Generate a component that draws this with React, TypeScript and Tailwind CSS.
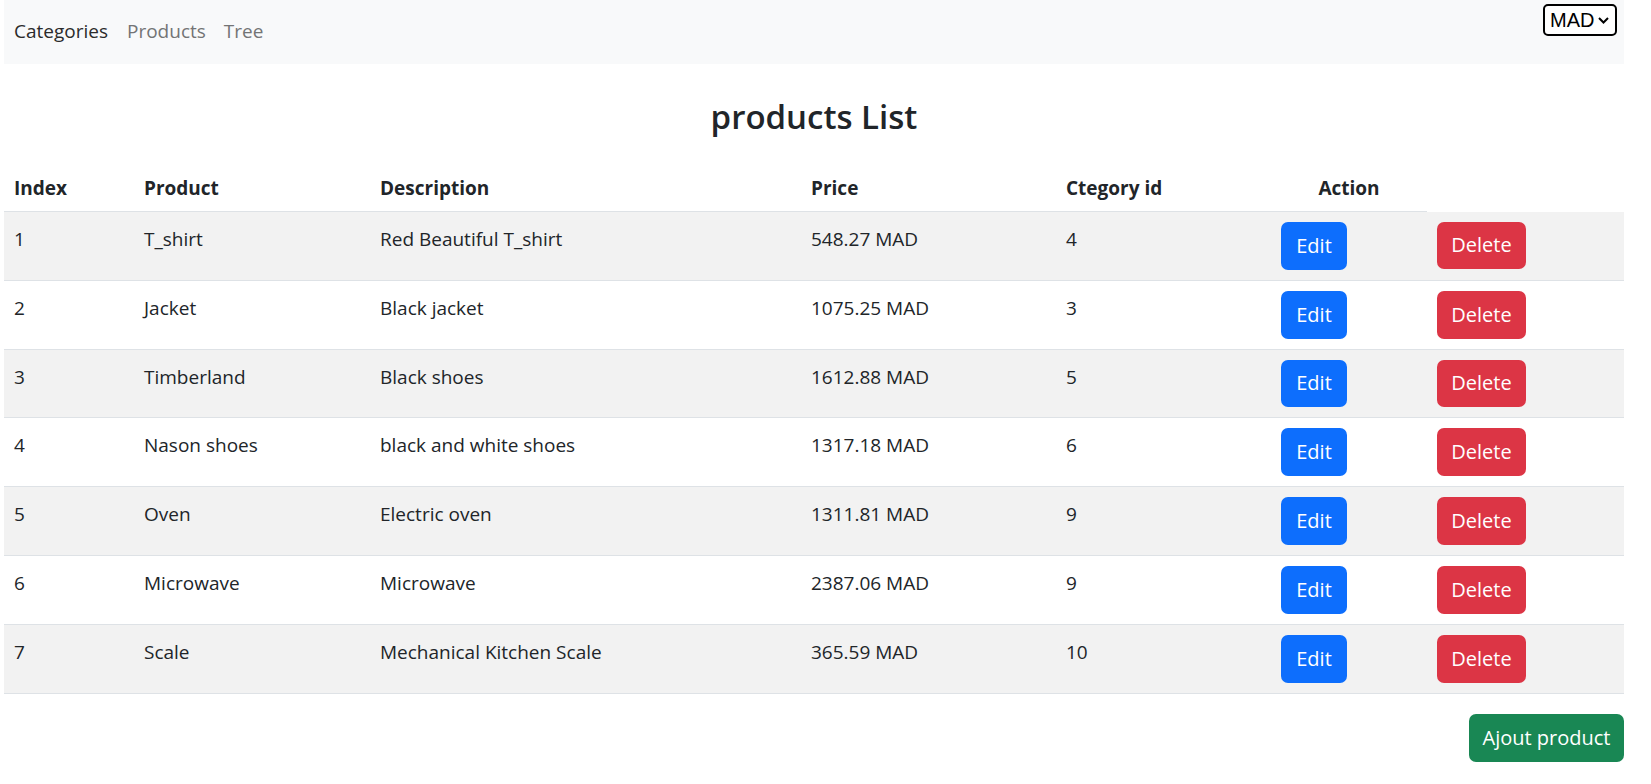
const products = [
  { id: 1, name: 'T_shirt', description: 'Red Beautiful T_shirt', price: '548.27 MAD', category: 4 },
  { id: 2, name: 'Jacket', description: 'Black jacket', price: '1075.25 MAD', category: 3 },
  { id: 3, name: 'Timberland', description: 'Black shoes', price: '1612.88 MAD', category: 5 },
  { id: 4, name: 'Nason shoes', description: 'black and white shoes', price: '1317.18 MAD', category: 6 },
  { id: 5, name: 'Oven', description: 'Electric oven', price: '1311.81 MAD', category: 9 },
  { id: 6, name: 'Microwave', description: 'Microwave', price: '2387.06 MAD', category: 9 },
  { id: 7, name: 'Scale', description: 'Mechanical Kitchen Scale', price: '365.59 MAD', category: 10 },
]

function Navbar() {
  return (
    <nav className="flex h-[64px] items-start justify-between bg-[#f8f9fa]">
      <ul className="flex pt-[16px] text-[19px] leading-[30px]">
        <li className="px-[10px] text-[#2b2b2b]">Categories</li>
        <li className="pl-[9px] pr-[8px] text-[#737475]">Products</li>
        <li className="px-[10px] text-[#737475]">Tree</li>
      </ul>
      <div className="mt-[4px] mr-[7px] flex h-[32px] w-[74px] items-center rounded-[5px] border-2 border-black bg-white pl-[5px] font-['Liberation_Sans',Arial,sans-serif] text-[20px] text-black">
        <span>MAD</span>
        <svg className="ml-[4px]" width="11" height="7" viewBox="0 0 11 7" fill="none">
          <polyline points="1,1 5.5,5.5 10,1" stroke="black" strokeWidth="2" />
        </svg>
      </div>
    </nav>
  )
}

export default function App() {
  return (
    <div className="min-h-screen bg-white font-['Open_Sans',sans-serif] text-[#212529]">
      <div className="ml-[4px] w-[1620px]">
        <Navbar />

        <h3 className="mt-[33px] mb-[24px] text-center text-[33px] leading-[40px] font-semibold">
          products List
        </h3>

        <table className="w-full table-fixed border-collapse text-[19px] leading-[30px]">
          <colgroup>
            <col className="w-[130px]" />
            <col className="w-[236px]" />
            <col className="w-[431px]" />
            <col className="w-[255px]" />
            <col className="w-[215px]" />
            <col className="w-[156px]" />
            <col className="w-[197px]" />
          </colgroup>
          <thead>
            <tr>
              {['Index', 'Product', 'Description', 'Price', 'Ctegory id'].map((h) => (
                <th key={h} className="border-b border-[#dee2e6] px-[10px] pt-[12px] pb-[8px] text-left font-bold">
                  {h}
                </th>
              ))}
              <th className="border-b border-[#dee2e6] px-[10px] pt-[12px] pb-[8px] text-center font-bold">Action</th>
            </tr>
          </thead>
          <tbody>
            {products.map((p, i) => (
              <tr key={p.id} className={i % 2 === 0 ? 'bg-[#f2f2f2]' : 'bg-white'}>
                <td className="border-b border-[#dee2e6] px-[10px] pt-[12px] align-top">{p.id}</td>
                <td className="border-b border-[#dee2e6] px-[10px] pt-[12px] align-top">{p.name}</td>
                <td className="border-b border-[#dee2e6] px-[10px] pt-[12px] align-top">{p.description}</td>
                <td className="border-b border-[#dee2e6] px-[10px] pt-[12px] align-top">{p.price}</td>
                <td className="border-b border-[#dee2e6] px-[10px] pt-[12px] align-top">{p.category}</td>
                <td className="border-b border-[#dee2e6] px-[10px] py-[10px] align-top">
                  <button className="h-[47.8px] w-[66px] rounded-[7px] bg-[#0d6efd] text-[20px] text-white">Edit</button>
                </td>
                <td className="border-b border-[#dee2e6] px-[10px] py-[10px] align-top">
                  <button className="h-[47.8px] w-[89px] rounded-[7px] bg-[#dc3545] text-[20px] text-white">Delete</button>
                </td>
              </tr>
            ))}
          </tbody>
        </table>

        <div className="mt-[20px] flex justify-end">
          <button className="h-[48px] w-[155px] rounded-[7px] bg-[#198754] text-[20px] text-white">
            Ajout product
          </button>
        </div>
      </div>
    </div>
  )
}
